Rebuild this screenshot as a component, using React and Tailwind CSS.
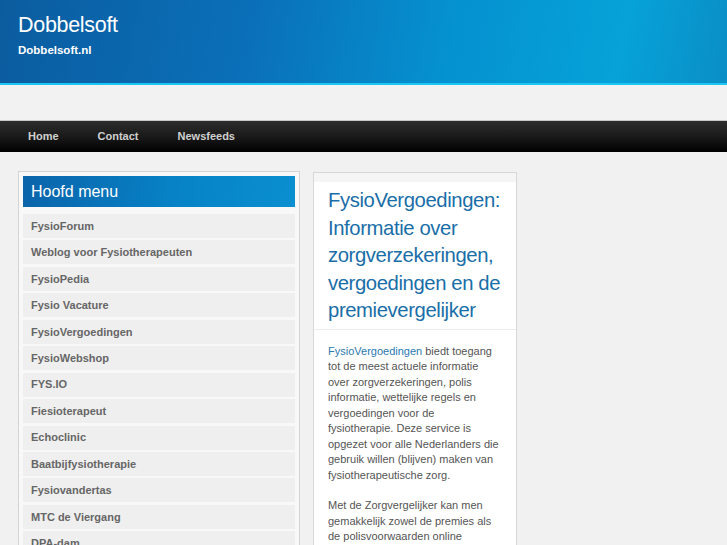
import React from 'react';

const menuItems = [
  'FysioForum',
  'Weblog voor Fysiotherapeuten',
  'FysioPedia',
  'Fysio Vacature',
  'FysioVergoedingen',
  'FysioWebshop',
  'FYS.IO',
  'Fiesioterapeut',
  'Echoclinic',
  'Baatbijfysiotherapie',
  'Fysiovandertas',
  'MTC de Viergang',
  'DPA-dam',
];

const navItems = ['Home', 'Contact', 'Newsfeeds'];

const App = () => {
  return (
    <div className="w-[727px] h-[545px] overflow-hidden bg-[#f1f1f1] font-['Liberation_Sans',Arial,sans-serif]">
      {/* header */}
      <div className="h-[83px] bg-[linear-gradient(100deg,#0b5c9f_0%,#0a70b9_35%,#0592d0_62%,#06a2d8_85%,#0a8ec6_100%)] pl-[18px] pt-[12px]">
        <div className="text-white text-[21.5px] leading-[26px] tracking-[-0.3px]">
          Dobbelsoft
        </div>
        <div className="text-white text-[11.5px] font-bold mt-[4px]">
          Dobbelsoft.nl
        </div>
      </div>
      <div className="h-[2px] bg-[#1cc6f2]" />
      <div className="h-[35px] bg-[#f2f2f2]" />

      {/* nav */}
      <div className="border-t border-[#c8c8c8] h-[32px] bg-[linear-gradient(#2d2d2d,#1a1a1a_50%,#000)] flex items-center pl-[28px] gap-[39px]">
        {navItems.map((item) => (
          <span key={item} className="text-[#d0d0d0] text-[11px] font-bold">
            {item}
          </span>
        ))}
      </div>

      {/* body */}
      <div className="flex items-start pt-[19px] pl-[18px] gap-[13px]">
        <div className="w-[282px] border border-[#d4d4d4] bg-[#f8f8f8] p-[4px] h-[400px]">
          <div className="h-[31px] bg-[linear-gradient(100deg,#0a64aa,#0784c8_60%,#0a8fd0)] text-white text-[16px] pl-[8px] flex items-center">
            Hoofd menu
          </div>
          <div className="mt-[7px] flex flex-col gap-[2.45px]">
            {menuItems.map((item) => (
              <div
                key={item}
                className="h-[24px] bg-[#efefef] flex items-center pl-[8px] text-[11px] font-bold text-[#666]"
              >
                {item}
              </div>
            ))}
          </div>
        </div>

        <div className="w-[204px] border border-[#d8d8d8] bg-white h-[400px] mt-[1px]">
          <div className="h-[9px] bg-[#f5f5f5]" />
          <div className="pl-[14px] pr-[6px] pt-[5px] pb-[4px] text-[#1a6ea8] text-[20.3px] leading-[27.5px] tracking-[-0.4px] border-b border-[#ececec]">
            FysioVergoedingen: Informatie over zorgverzekeringen, vergoedingen en de premievergelijker
          </div>
          <div className="px-[14px] pt-[14px] text-[11px] leading-[15.5px] text-[#555]">
            <p>
              <span className="text-[#2a7ab0]">FysioVergoedingen</span> biedt toegang tot de meest actuele informatie over zorgverzekeringen, polis informatie, wettelijke regels en vergoedingen voor de fysiotherapie. Deze service is opgezet voor alle Nederlanders die gebruik willen (blijven) maken van fysiotherapeutische zorg.
            </p>
            <p className="mt-[15px]">
              Met de Zorgvergelijker kan men gemakkelijk zowel de premies als de polisvoorwaarden online vergelijken.
            </p>
          </div>
        </div>
      </div>
    </div>
  );
};

export default App;
